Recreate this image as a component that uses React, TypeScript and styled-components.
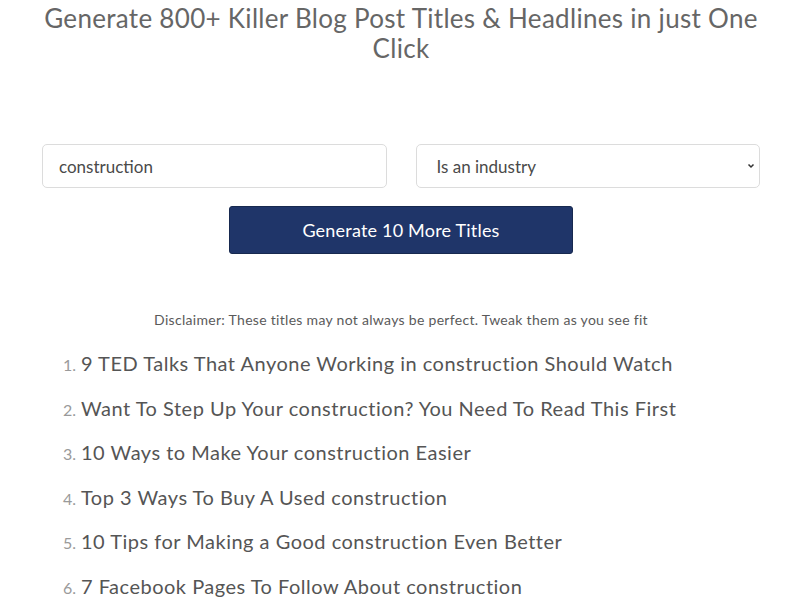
import React from "react";
import styled, { createGlobalStyle } from "styled-components";

const Global = createGlobalStyle`
  html, body { margin: 0; padding: 0; background: #ffffff; }
  body { font-family: Lato, "Open Sans", sans-serif; color: #555; }
`;

const Page = styled.div`
  width: 800px;
  box-sizing: border-box;
  padding: 3px 40px 0 42px;
  display: flex;
  flex-direction: column;
  align-items: stretch;
`;

const Title = styled.h1`
  margin: 0;
  font-family: Lato, sans-serif;
  font-weight: 400;
  font-size: 26px;
  line-height: 30px;
  letter-spacing: 0.3px;
  color: #666;
  text-align: center;
`;

const FormRow = styled.div`
  margin-top: 81px;
  display: grid;
  grid-template-columns: 1fr 1fr;
  column-gap: 29px;
`;

const Field = styled.div<{ $pad: number }>`
  height: 44px;
  box-sizing: border-box;
  border: 1px solid #dcdcdc;
  border-radius: 5px;
  display: flex;
  align-items: center;
  justify-content: space-between;
  padding: 0 3px 0 ${(p) => p.$pad}px;
  font-size: 17px;
  color: #4a4a4a;
  background: #fff;
`;

const Chevron = styled.svg`
  width: 10px;
  height: 10px;
`;

const ButtonRow = styled.div`
  display: flex;
  justify-content: center;
  margin-top: 18px;
`;

const Button = styled.button`
  width: 344px;
  height: 48px;
  border: 1px solid #17294f;
  border-radius: 3px;
  background: #1f3569;
  color: #fff;
  font-family: Lato, sans-serif;
  font-size: 18px;
  letter-spacing: 0.2px;
  font-weight: 400;
`;

const Disclaimer = styled.p`
  margin: 58px 0 0;
  text-align: center;
  font-size: 14px;
  letter-spacing: 0.3px;
  color: #5a5a5a;
  line-height: 16px;
`;

const List = styled.ol`
  list-style: none;
  margin: 13px 0 0;
  padding: 0 0 0 21px;
`;

const Item = styled.li`
  display: flex;
  align-items: baseline;
  height: 44.6px;
  line-height: 44.6px;
`;

const Num = styled.span`
  font-size: 16px;
  color: #9a9a9a;
  width: 18px;
  flex: none;
`;

const Text = styled.span`
  font-size: 20px;
  letter-spacing: 0.5px;
  color: #555;
`;

const titles = [
  "9 TED Talks That Anyone Working in construction Should Watch",
  "Want To Step Up Your construction? You Need To Read This First",
  "10 Ways to Make Your construction Easier",
  "Top 3 Ways To Buy A Used construction",
  "10 Tips for Making a Good construction Even Better",
  "7 Facebook Pages To Follow About construction",
];

export default function App() {
  return (
    <>
      <Global />
      <Page>
        <Title>Generate 800+ Killer Blog Post Titles &amp; Headlines in just One Click</Title>
        <FormRow>
          <Field $pad={16}>construction</Field>
          <Field $pad={20}>
            Is an industry
            <Chevron viewBox="0 0 10 10">
              <path d="M2.5 3.5 L5 6 L7.5 3.5" fill="none" stroke="#333" strokeWidth="1.5" />
            </Chevron>
          </Field>
        </FormRow>
        <ButtonRow>
          <Button>Generate 10 More Titles</Button>
        </ButtonRow>
        <Disclaimer>Disclaimer: These titles may not always be perfect. Tweak them as you see fit</Disclaimer>
        <List>
          {titles.map((t, i) => (
            <Item key={i}>
              <Num>{i + 1}.</Num>
              <Text>{t}</Text>
            </Item>
          ))}
        </List>
      </Page>
    </>
  );
}
